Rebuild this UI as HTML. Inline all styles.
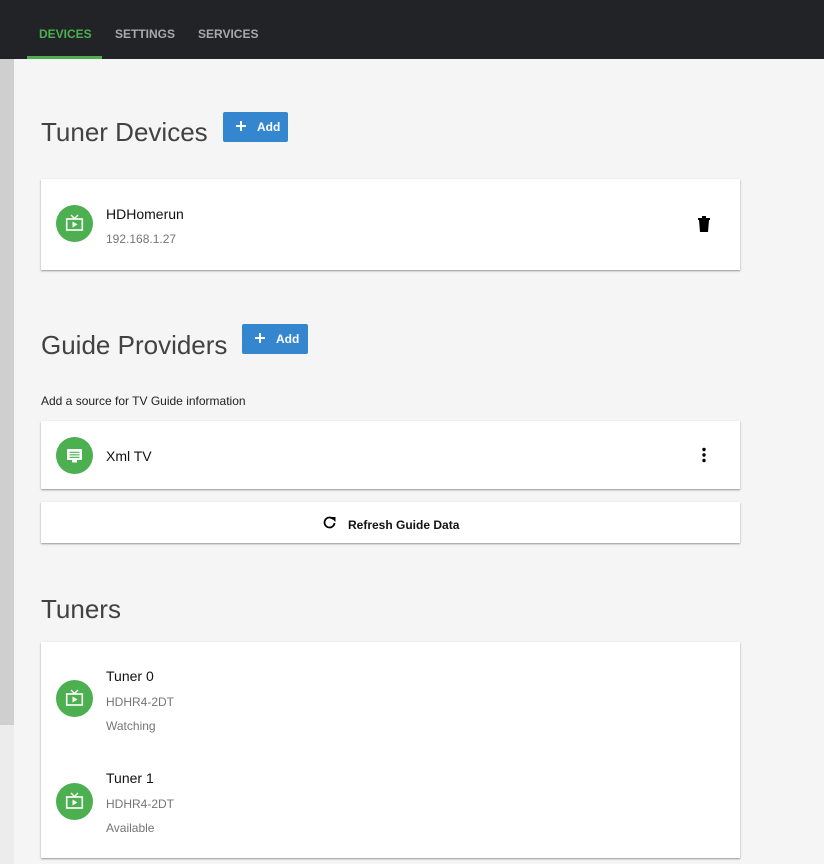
<!DOCTYPE html>
<html><head><meta charset="utf-8"><style>
*{box-sizing:border-box;margin:0;padding:0}
body{width:824px;height:864px;overflow:hidden;background:#f5f5f5;font-family:"Liberation Sans",sans-serif;position:relative}
.nav{position:absolute;left:0;top:0;width:824px;height:59px;background:#222327}
.tab{position:absolute;top:27px;font-size:12px;font-weight:bold;color:#a9a9ab;letter-spacing:0}
.ind{position:absolute;left:27px;top:56px;width:75px;height:3px;background:#4caf50}
.strip{position:absolute;left:0;top:59px;width:14px;height:666px;background:#cfcfcf}
.strip2{position:absolute;left:0;top:725px;width:14px;height:139px;background:#ececec}
.abs{position:absolute}
h2{position:absolute;font-weight:normal;font-size:26px;color:#424242;white-space:nowrap}
.btn{position:absolute;height:30px;background:#3487cf;border-radius:2px;color:#fff;font-size:12px;font-weight:bold}
.btn span{position:absolute;left:34px;top:8px}
.btn svg{position:absolute;left:12px;top:8px}
.card{position:absolute;left:41px;width:699px;background:#fff;box-shadow:0 1px 2px rgba(0,0,0,.3),0 1px 1px rgba(0,0,0,.12)}
.av{position:absolute;width:37px;height:37px;border-radius:50%;background:#4caf50}
.av svg{position:absolute;left:9px;top:9px}
.t1{position:absolute;font-size:14px;color:#111;white-space:nowrap}
.t2{position:absolute;font-size:12px;color:#757575;white-space:nowrap}
</style></head><body>
<div class="nav">
<div class="tab" style="left:39px;color:#4caf50">DEVICES</div>
<div class="tab" style="left:115px">SETTINGS</div>
<div class="tab" style="left:198px">SERVICES</div>
<div class="ind"></div>
</div>
<div class="strip"></div><div class="strip2"></div>

<h2 style="left:41px;top:117px">Tuner Devices</h2>
<div class="btn" style="left:223px;top:112px;width:65px"><svg width="12" height="12" viewBox="0 0 12 12"><path d="M6 1v10M1 6h10" stroke="#fff" stroke-width="2"/></svg><span>Add</span></div>

<div class="card" style="top:179px;height:91px">
<div class="av" style="left:15px;top:26px"><svg width="19" height="19" viewBox="0 0 19 19"><path d="M6 1l3.5 3.5L13 1" stroke="#fff" stroke-width="1.4" fill="none"/><rect x="1.7" y="5" width="15.6" height="11" stroke="#fff" stroke-width="1.6" fill="none"/><path d="M7.5 7.5v6l5-3z" fill="#fff"/></svg></div>
<div class="t1" style="left:65px;top:27px">HDHomerun</div>
<div class="t2" style="left:65px;top:53px">192.168.1.27</div>
<svg class="abs" style="left:656px;top:36px" width="14" height="18" viewBox="0 0 14 18"><path d="M1 3h12v2H1zM5 1h4v2H5zM2 5h10l-1 12H3z" fill="#000"/></svg>
</div>

<h2 style="left:41px;top:330px">Guide Providers</h2>
<div class="btn" style="left:242px;top:324px;width:66px"><svg width="12" height="12" viewBox="0 0 12 12"><path d="M6 1v10M1 6h10" stroke="#fff" stroke-width="2"/></svg><span>Add</span></div>
<div class="abs" style="left:41px;top:394px;font-size:12px;color:#222">Add a source for TV Guide information</div>

<div class="card" style="top:421px;height:68px">
<div class="av" style="left:15px;top:16px"><svg width="19" height="19" viewBox="0 0 19 19"><rect x="2" y="3" width="15" height="11" rx="1" fill="#fff"/><path d="M4.5 6.3h10M4.5 8.8h10M4.5 11.3h10" stroke="#4caf50" stroke-width="1.2"/><rect x="7" y="14" width="5" height="2.5" fill="#fff"/></svg></div>
<div class="t1" style="left:65px;top:27px">Xml TV</div>
<svg class="abs" style="left:661px;top:26px" width="4" height="16" viewBox="0 0 4 16"><circle cx="2" cy="2.5" r="1.7"/><circle cx="2" cy="8" r="1.7"/><circle cx="2" cy="13.5" r="1.7"/></svg>
</div>

<div class="card" style="top:502px;height:41px">
<svg class="abs" style="left:282px;top:14px" width="13" height="13" viewBox="0 0 13 13"><path d="M10.3 3.2A5 5 0 1 0 11.5 7" stroke="#000" stroke-width="1.8" fill="none"/><path d="M7.5 1h5v5z" fill="#000"/></svg>
<div class="abs" style="left:307px;top:16px;font-size:12px;font-weight:bold;color:#111">Refresh Guide Data</div>
</div>

<h2 style="left:41px;top:594px">Tuners</h2>

<div class="card" style="top:642px;height:216px">
<div class="av" style="left:15px;top:38px"><svg width="19" height="19" viewBox="0 0 19 19"><path d="M6 1l3.5 3.5L13 1" stroke="#fff" stroke-width="1.4" fill="none"/><rect x="1.7" y="5" width="15.6" height="11" stroke="#fff" stroke-width="1.6" fill="none"/><path d="M7.5 7.5v6l5-3z" fill="#fff"/></svg></div>
<div class="t1" style="left:65px;top:26px">Tuner 0</div>
<div class="t2" style="left:65px;top:53px">HDHR4-2DT</div>
<div class="t2" style="left:65px;top:77px">Watching</div>
<div class="av" style="left:15px;top:141px"><svg width="19" height="19" viewBox="0 0 19 19"><path d="M6 1l3.5 3.5L13 1" stroke="#fff" stroke-width="1.4" fill="none"/><rect x="1.7" y="5" width="15.6" height="11" stroke="#fff" stroke-width="1.6" fill="none"/><path d="M7.5 7.5v6l5-3z" fill="#fff"/></svg></div>
<div class="t1" style="left:65px;top:128px">Tuner 1</div>
<div class="t2" style="left:65px;top:155px">HDHR4-2DT</div>
<div class="t2" style="left:65px;top:179px">Available</div>
</div>
</body></html>
